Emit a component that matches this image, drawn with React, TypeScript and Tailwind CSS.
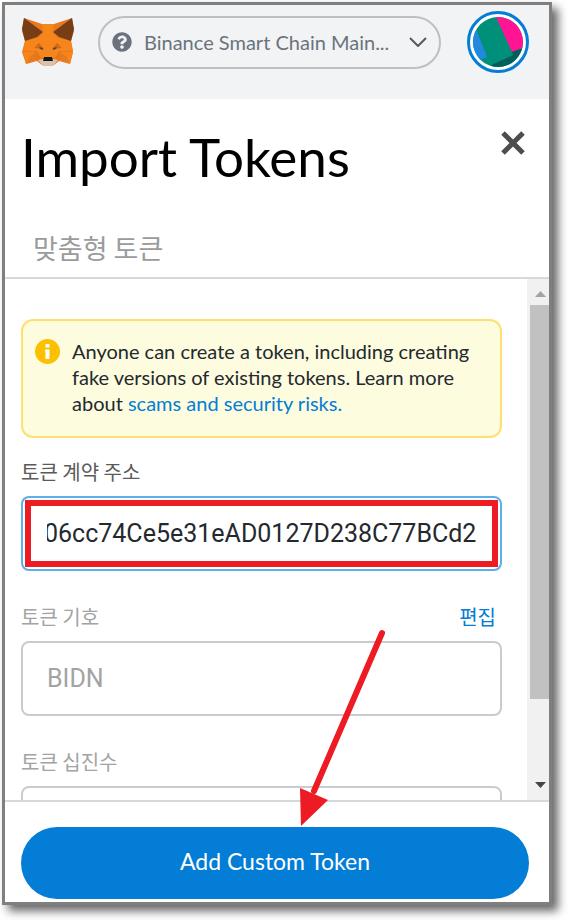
import { useEffect, useRef, useState } from "react"
import type { ReactNode } from "react"
import { FaQuestionCircle } from "react-icons/fa"

type FieldProps = {
  id: string
  label: string
  labelColor: string
  action?: ReactNode
  children: ReactNode
}

const koreanFont = "font-['Noto_Sans_CJK_KR',sans-serif]"

function FoxLogo() {
  return (
    <svg viewBox="0 0 52 49" className="h-[49px] w-[52px] shrink-0" aria-label="MetaMask">
      <path d="M2 0 20 6H32L50 0 52 13 49 23 51 34 48 46 37 43 32 47H20L15 43 4 46 0 34 3 23 0 13Z" fill="#e8791f" />
      <path d="M20 6H32L31 14 36 20 38 32 33 40H19L14 32 16 20 21 14Z" fill="#f6851b" />
      <path d="M3 23 19 19 14 33H1ZM49 23 33 19 38 33H51Z" fill="#f6851b" />
      <path d="M1 34H14L8 38 4 46ZM51 34H38L44 38 48 46Z" fill="#f6851b" />
      <path d="M2 0 21 14 15 19 3 23 0 11ZM50 0 31 14 37 19 49 23 52 11Z" fill="#763d16" />
      <path d="M12 30 17 25 22 31ZM40 30 35 25 30 31Z" fill="#d5671a" />
      <path d="M17 29 21 30 21 32 18 31ZM35 29 31 30 31 32 34 31Z" fill="#4a4a4a" />
      <path d="M14 33 19 40 15 43ZM38 33 33 40 37 43Z" fill="#e2761b" />
      <path d="M16 42 21 41H31L36 42 31 48H21Z" fill="#d7c1b3" />
      <path d="M22 39H30L31 43H21Z" fill="#161616" />
    </svg>
  )
}

function AccountAvatar() {
  return (
    <button
      type="button"
      aria-label="Account"
      className="h-[62px] w-[62px] shrink-0 rounded-full border-3 border-[#037dd6] bg-white p-[3px]"
    >
      <svg viewBox="0 0 50 50" className="h-full w-full rounded-full">
        <rect width="50" height="50" fill="#00907a" />
        <path d="M0 8 3 12 14 40 0 46Z" fill="#2389e0" />
        <path d="M23 0 39 35 50 31V0Z" fill="#ff1493" />
        <path d="M14 50 40 38 39 35 50 31V50Z" fill="#00605a" />
      </svg>
    </button>
  )
}

function Field({ id, label, labelColor, action, children }: FieldProps) {
  return (
    <div className="mb-[29px]">
      <div className={`mb-2 flex h-[33px] items-center justify-between pr-1.5 text-[20px] ${koreanFont}`}>
        <label htmlFor={id} className={labelColor}>
          {label}
        </label>
        {action}
      </div>
      {children}
    </div>
  )
}

function Scrollbar() {
  return (
    <div className="flex w-[22px] shrink-0 flex-col items-end bg-[#f1f1f1]" aria-hidden="true">
      <svg viewBox="0 0 18 26" className="h-[26px] w-[18px] shrink-0">
        <path d="M4 18 9.500 12 15 18Z" fill="#a3a3a3" />
      </svg>
      <div className="flex w-full flex-1 flex-col items-end">
        <div className="h-[84%] w-[19px] bg-[#c1c1c1]" />
      </div>
      <svg viewBox="0 0 18 26" className="h-[26px] w-[18px] shrink-0">
        <path d="M4 8 9.500 14 15 8Z" fill="#444" />
      </svg>
    </div>
  )
}

export default function ImportTokens() {
  const [address, setAddress] = useState("06cc74Ce5e31eAD0127D238C77BCd2")
  const addressRef = useRef<HTMLInputElement>(null)

  // keep the end of the address in view
  useEffect(() => {
    const el = addressRef.current
    if (el) el.scrollLeft = el.scrollWidth
  }, [address])

  return (
    <div className="h-screen bg-white pt-0.5 pr-4 pb-4 pl-0.5 font-['Lato',sans-serif]">
      <div className="relative flex h-full flex-col border-3 border-[#7f7f7f] bg-white shadow-[6px_6px_9px_rgba(0,0,0,0.6)]">
        <header className="flex h-[94px] shrink-0 items-start justify-between bg-[#f2f3f4] pt-1.5 pr-5 pl-[17px]">
          <div className="flex h-[62px] items-center">
            <FoxLogo />
          </div>
          <button
            type="button"
            className="mt-[5px] mr-[26px] ml-6 flex h-[53px] min-w-0 flex-1 items-center rounded-full border-2 border-[#bbc0c5] px-3 pb-0.5 text-[#6a737d]"
          >
            <FaQuestionCircle className="h-5 w-5 shrink-0" />
            <span className="ml-3 min-w-0 flex-1 truncate text-left text-[20px]">Binance Smart Chain Main...</span>
            <svg viewBox="0 0 18 10" className="h-2.5 w-[18px] shrink-0" fill="none" stroke="#535a61" strokeWidth="2">
              <path d="M1 1 9 9 17 1" />
            </svg>
          </button>
          <AccountAvatar />
        </header>

        <div className="flex shrink-0 items-start justify-between pt-[26px] pr-6 pl-4">
          <h1 className="text-[53px] leading-[64px] text-black">Import Tokens</h1>
          <button type="button" aria-label="Close" className="mt-1.5 text-[#4d4d4d]">
            <svg viewBox="0 0 24 24" className="h-6 w-6" fill="none" stroke="currentColor" strokeWidth="5">
              <path d="M2 2 22 22M22 2 2 22" />
            </svg>
          </button>
        </div>

        <div className="shrink-0 border-b-2 border-[#d6d9dc] pt-8 pl-7">
          <button type="button" className={`block h-14 pb-0.5 text-[27px] text-[#9b9b9b] ${koreanFont}`}>
            맞춤형 토큰
          </button>
        </div>

        <main className="flex min-h-0 flex-1">
          <div className="min-w-0 flex-1 overflow-hidden pt-10 pr-[25px] pl-4">
            <div className="mb-[17px] flex rounded-xl border-2 border-[#ffdf70] bg-[#fefcde] pt-[17px] pr-4 pb-5 pl-3">
              <svg viewBox="0 0 25 25" className="mt-px h-[25px] w-[25px] shrink-0">
                <circle cx="12.500" cy="12.500" r="12.500" fill="#fbc100" />
                <path d="M10.500 5H14.500V8.500H10.500ZM10 10.500H14.500V20H10.500V12.500H10Z" fill="#fff" />
              </svg>
              <p className="ml-3 text-[20px] leading-[26px] text-[#24292e]">
                Anyone can create a token, including creating fake versions of existing tokens. Learn more about{" "}
                <a href="#security" className="text-[#037dd6]">
                  scams and security risks.
                </a>
              </p>
            </div>

            <Field id="address" label="토큰 계약 주소" labelColor="text-[#5b5b5b]">
              <div className="relative">
                <input
                  id="address"
                  ref={addressRef}
                  value={address}
                  onChange={(e) => setAddress(e.target.value)}
                  className="block h-[75px] w-full rounded-lg border-2 border-[#5bb0ea] px-6 font-['Roboto',sans-serif] text-[25px] text-[#24292e] outline-none"
                />
                <div className="pointer-events-none absolute inset-1 border-6 border-[#ed1c24]" />
              </div>
            </Field>

            <Field
              id="symbol"
              label="토큰 기호"
              labelColor="text-[#a3a3a3]"
              action={
                <button type="button" className="text-[#037dd6]">
                  편집
                </button>
              }
            >
              <input
                id="symbol"
                defaultValue="BIDN"
                className="block h-[75px] w-full rounded-lg border-2 border-[#c8ccd0] px-6 font-['Roboto',sans-serif] text-[25px] text-[#a3a3a3] outline-none"
              />
            </Field>

            <Field id="decimals" label="토큰 십진수" labelColor="text-[#a3a3a3]">
              <input
                id="decimals"
                className="block h-[75px] w-full rounded-lg border-2 border-[#c8ccd0] px-6 font-['Roboto',sans-serif] text-[25px] text-[#a3a3a3] outline-none"
              />
            </Field>
          </div>
          <Scrollbar />
        </main>

        <footer className="shrink-0 border-t-2 border-[#d6d9dc] pt-[25px] pr-5 pb-[3px] pl-4">
          <button type="button" className="h-[72px] w-full rounded-full bg-[#037dd6] pb-1 text-[23px] text-white">
            Add Custom Token
          </button>
        </footer>

        {/* arrow pointing at the submit button */}
        <svg
          viewBox="0 0 88 200"
          className="pointer-events-none absolute right-[163px] bottom-[74px] h-[200px] w-[88px]"
          aria-hidden="true"
        >
          <path d="M84 5 16 163" stroke="#ed1c24" strokeWidth="6" strokeLinecap="round" />
          <path d="M2 160 30 172 3 198Z" fill="#ed1c24" />
        </svg>
      </div>
    </div>
  )
}
